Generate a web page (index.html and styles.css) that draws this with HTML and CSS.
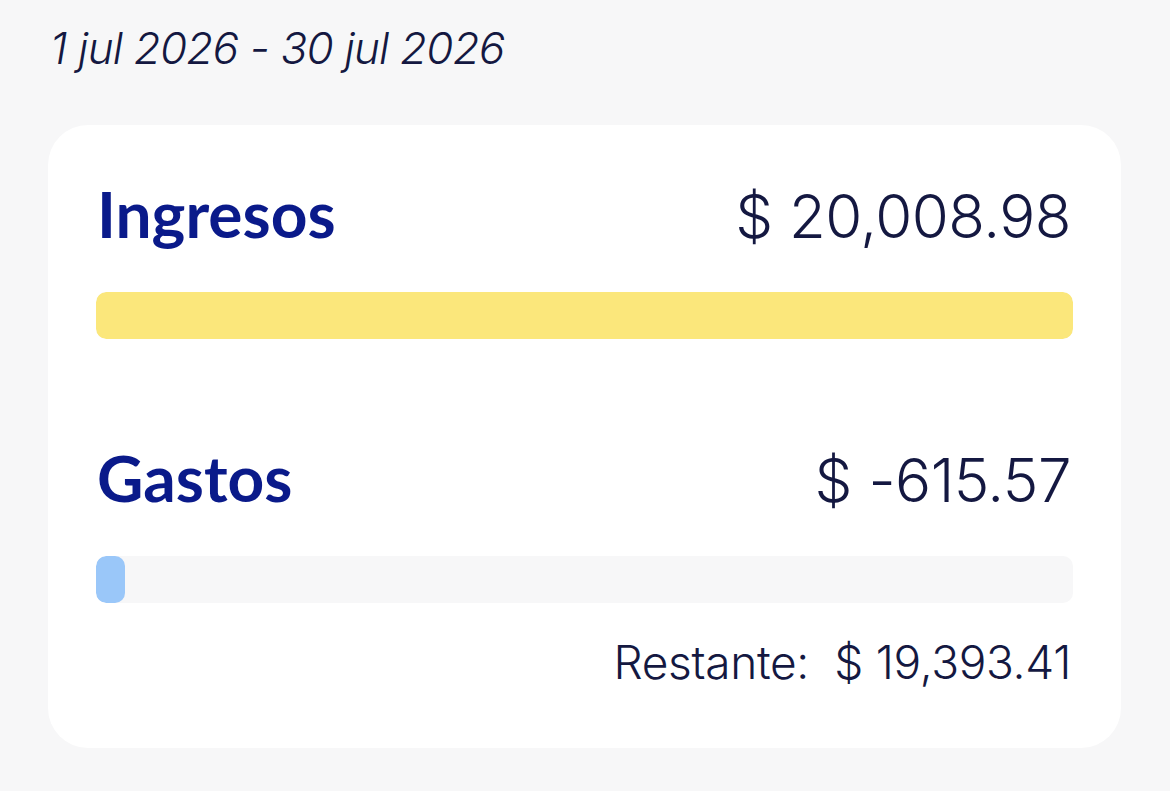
FILE: index.html
```html
<!DOCTYPE html>
<html lang="es">
<head>
<meta charset="utf-8">
<title>Resumen</title>
<link rel="stylesheet" href="styles.css">
</head>
<body>
<main class="summary">
  <p class="period">1 jul 2026 - 30 jul 2026</p>
  <section class="card">
    <div class="row">
      <h2 class="label">Ingresos</h2>
      <span class="amount">$ 20,008.98</span>
    </div>
    <div class="track track-income">
      <div class="fill fill-income" style="width:100%"></div>
    </div>
    <div class="row row-expenses">
      <h2 class="label">Gastos</h2>
      <span class="amount">$ -615.57</span>
    </div>
    <div class="track">
      <div class="fill fill-expenses" style="width:3%"></div>
    </div>
    <p class="remaining">Restante:&nbsp; $ 19,393.41</p>
  </section>
</main>
</body>
</html>
```
FILE: styles.css
```css
* { box-sizing: border-box; }

html, body {
  margin: 0;
  background: #f7f7f8;
}

body {
  font-family: Inter, "Noto Sans", sans-serif;
  color: #141841;
}

.summary {
  padding: 20px 49px 0 48px;
  display: flex;
  flex-direction: column;
}

.period {
  margin: 0 0 0 2px;
  font-size: 44px;
  line-height: 56px;
  font-style: italic;
  font-weight: 300;
  letter-spacing: -0.8px;
}

.card {
  margin-top: 49px;
  background: #ffffff;
  border-radius: 40px;
  padding: 51px 48px 58px 48px;
  display: flex;
  flex-direction: column;
}

.row {
  display: flex;
  justify-content: space-between;
  align-items: baseline;
}

.row-expenses {
  margin-top: 101px;
}

.label {
  margin: 0;
  font-family: Lato, Inter, sans-serif;
  font-weight: 700;
  font-size: 64px;
  line-height: 76px;
  color: #0a1a8a;
  padding-left: 1px;
}

.amount {
  font-weight: 300;
  font-size: 60px;
  line-height: 76px;
  letter-spacing: -0.5px;
  padding-right: 2px;
}

.track {
  margin-top: 38px;
  height: 47px;
  border-radius: 10px;
  background: #f7f7f8;
  overflow: hidden;
}

.fill {
  height: 100%;
  border-radius: 10px;
}

.fill-income { background: #fbe77b; }
.fill-expenses { background: #9ac7f9; min-width: 29px; }

.remaining {
  margin: 31px 2px 0 0;
  text-align: right;
  font-weight: 300;
  font-size: 46px;
  line-height: 56px;
  letter-spacing: -0.3px;
}
```
